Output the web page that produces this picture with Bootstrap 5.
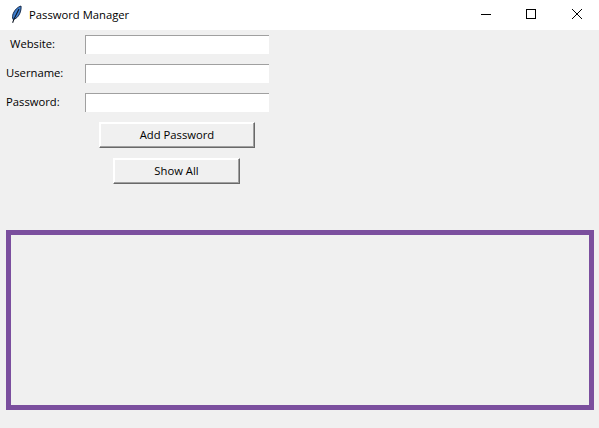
<!DOCTYPE html>
<html lang="en">
<head>
<meta charset="utf-8">
<title>Password Manager</title>
<link rel="stylesheet" href="https://cdn.jsdelivr.net/npm/bootstrap@5.3.0/dist/css/bootstrap.min.css">
<style>
html,body{height:100%}
body{background:#f0f0f0;color:#000;font-family:"Open Sans","Noto Sans",sans-serif;font-size:11.25px;line-height:16px;overflow:hidden}
.win-bar{height:30px;background:#fff}
.win-icon{width:16px;height:20px;margin-left:8px;margin-right:5px}
.win-ctl{width:46px;height:30px;padding:0 0 2px 2px}
.win-ctl-min{padding-left:4px}
.form-area{padding:5px 0 0 0}
.f-row{height:19px;margin-bottom:10px}
.f-label{width:85px;white-space:nowrap;padding-bottom:1px}
.f-label-w{padding-left:10px}
.f-label-u{padding-left:6px}
.f-input{width:184px;height:19px;background:#fff;border:0;border-top:1px solid #a0a0a0;border-left:1px solid #a0a0a0;border-radius:0;padding:0;outline:0;display:block}
.f-btn{display:block;background:#f0f0f0;color:#000;font-size:11.25px;line-height:16px;padding:0 0 1px;border-radius:0;border:1px solid;border-color:#fff #696969 #696969 #fff;box-shadow:inset -1px -1px 0 #a0a0a0,inset 1px 1px 0 #fff;height:26px}
.f-btn-add{width:156px;margin-left:99px}
.f-btn-show{width:127px;margin-left:113px;margin-top:10px}
.out-box{height:180px;margin:46px 5px 0 6px;border:5px solid #7b4f9e;background:#f0f0f0}
</style>
</head>
<body>
<div class="win-bar d-flex align-items-center">
  <svg class="win-icon" viewBox="0 0 16 20" aria-hidden="true">
    <path d="M13 1 C9.6 2 6.6 5 5.2 8.6 C4.4 10.8 4.4 12.8 5 14.4 C8 14 10.2 11.8 11.6 8.8 C12.7 6.4 13.3 3.6 13 1 Z" fill="#3f80d0" stroke="#14294a" stroke-width="1"/>
    <path d="M11 4 L6.2 13.6 L4.6 17.8" fill="none" stroke="#0c1420" stroke-width="1.1"/>
  </svg>
  <span class="flex-grow-1">Password Manager</span>
  <div class="win-ctl win-ctl-min d-flex align-items-center justify-content-center">
    <svg width="12" height="12" viewBox="0 0 12 12" aria-hidden="true"><path d="M1 6.5H11" stroke="#000" stroke-width="1"/></svg>
  </div>
  <div class="win-ctl d-flex align-items-center justify-content-center">
    <svg width="12" height="12" viewBox="0 0 12 12" aria-hidden="true"><rect x="1.5" y="1.5" width="9" height="9" fill="none" stroke="#000" stroke-width="1"/></svg>
  </div>
  <div class="win-ctl d-flex align-items-center justify-content-center">
    <svg width="12" height="12" viewBox="0 0 12 12" aria-hidden="true"><path d="M1 1L11 11M11 1L1 11" stroke="#000" stroke-width="1"/></svg>
  </div>
</div>
<div class="form-area">
  <div class="f-row d-flex align-items-center"><label class="f-label f-label-w">Website:</label><input class="f-input" type="text"></div>
  <div class="f-row d-flex align-items-center"><label class="f-label f-label-u">Username:</label><input class="f-input" type="text"></div>
  <div class="f-row d-flex align-items-center"><label class="f-label f-label-u">Password:</label><input class="f-input" type="text"></div>
  <button class="btn f-btn f-btn-add" type="button">Add Password</button>
  <button class="btn f-btn f-btn-show" type="button">Show All</button>
</div>
<div class="out-box"></div>
<script src="https://cdn.jsdelivr.net/npm/bootstrap@5.3.0/dist/js/bootstrap.bundle.min.js"></script>
</body>
</html>
